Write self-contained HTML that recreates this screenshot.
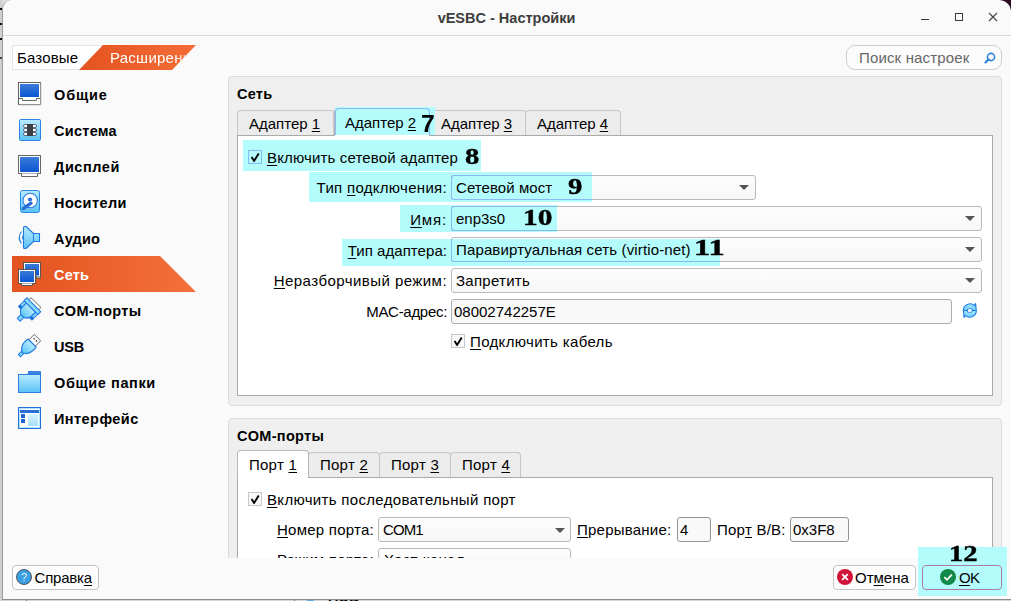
<!DOCTYPE html>
<html><head><meta charset="utf-8">
<style>
html,body{margin:0;padding:0;}
body{width:1011px;height:601px;overflow:hidden;position:relative;background:#dcdcdc;font-family:"Liberation Sans",sans-serif;}
.a{position:absolute;}
.t{position:absolute;font:15px/18px "Liberation Sans",sans-serif;white-space:pre;color:#000;letter-spacing:0.25px;}
.b{position:absolute;font:bold 14.5px/18px "Liberation Sans",sans-serif;white-space:pre;color:#000;letter-spacing:0.4px;}
.u{text-decoration:underline;text-underline-offset:2px;text-decoration-thickness:1px;}
.hl{position:absolute;background:#b4fcfb;}
.num{position:absolute;font:bold 23.5px/24px "Liberation Serif",serif;white-space:pre;color:#000;-webkit-text-stroke:0.4px #000;}
.combo{position:absolute;box-sizing:border-box;border:1px solid #b9b9b9;border-radius:3px;background:linear-gradient(#fdfdfd,#f7f7f7);}
.combo.h{border-color:#8ab8f6;background:#b4fcfb;}
.arr{position:absolute;width:0;height:0;border-left:5px solid transparent;border-right:5px solid transparent;border-top:5px solid #555;}
.field{position:absolute;box-sizing:border-box;border:1px solid #adadad;border-radius:3px;background:#f9f9f9;}
.cb{position:absolute;box-sizing:border-box;width:14px;height:14px;border:1px solid #c4c4c4;background:#fff;}
.cb svg{position:absolute;left:1px;top:1px;}
.tab{position:absolute;box-sizing:border-box;border:1px solid #c6c6c6;border-bottom:none;border-radius:4px 4px 0 0;background:#ececec;}
.btn{position:absolute;box-sizing:border-box;border:1px solid #c3c3c3;border-radius:4px;background:#fdfdfd;}
</style></head><body>
<!-- bottom background window strip -->
<div class="a" style="left:0;top:599px;width:1011px;height:2px;background:#d6d6d6;"></div><div class="a" style="left:26px;top:599px;width:1px;height:2px;background:#777;"></div><div class="a" style="left:294px;top:599px;width:1px;height:2px;background:#777;"></div><div class="b" style="left:328px;top:595px;">USB</div><div class="a" style="left:307px;top:599px;width:7px;height:2px;border-radius:3px 3px 0 0;background:#5aa8e8;"></div><div class="a" style="left:0;top:0;width:2px;height:601px;background:#cfcfcf;"></div><div class="a" style="left:0;top:8px;width:2px;height:2px;background:#111;"></div><div class="a" style="left:0;top:23px;width:2px;height:2px;background:#111;"></div><div class="a" style="left:0;top:38px;width:2px;height:2px;background:#111;"></div><div class="a" style="left:0;top:57px;width:2px;height:2px;background:#444;"></div>
<!-- window -->
<div class="a" id="win" style="left:2px;top:0;width:1009px;height:600px;background:#fafafa;border-left:1px solid #9a9a9a;border-bottom:1px solid #8a8a8a;border-radius:9px 12px 0 0;box-sizing:border-box;overflow:hidden;"></div>
<!-- dark corner top-right -->
<div class="a" style="left:995px;top:0;width:16px;height:16px;background:#2c0a22;z-index:-1"></div>
<!-- title bar -->
<div class="a" style="left:3px;top:35px;width:1008px;height:1px;background:#d9d9d9;"></div>
<div class="a" style="left:0;top:9px;width:1013px;text-align:center;font:bold 14.5px/18px 'Liberation Sans',sans-serif;color:#3d3d3d;">vESBC - Настройки</div>
<!-- window buttons -->
<div class="a" style="left:921px;top:19px;width:8px;height:1px;background:#3a3a3a;"></div>
<div class="a" style="left:955px;top:13px;width:8px;height:8px;box-sizing:border-box;border:1px solid #3a3a3a;"></div>
<svg class="a" style="left:988px;top:12px" width="10" height="10"><path d="M1 1L9 9M9 1L1 9" stroke="#444" stroke-width="1.1"/></svg>

<!-- segmented switch -->
<div class="a" style="left:12px;top:45px;width:90px;height:25px;box-sizing:border-box;border:1px solid #e4e4e4;background:#fff;"></div>
<div class="t" style="letter-spacing:0.15px;left:17px;top:49px;">Базовые</div>
<svg class="a" style="left:78px;top:45px" width="120" height="25"><defs><linearGradient id="og" x1="0" x2="1"><stop offset="0" stop-color="#e4531f"/><stop offset="1" stop-color="#f56d37"/></linearGradient></defs><polygon points="25,0 118,0 94,25 1,25" fill="url(#og)"/></svg>
<div class="t" style="left:110px;top:49px;color:#fff;width:90px;overflow:hidden;letter-spacing:0.25px;-webkit-mask-image:linear-gradient(90deg,#000 0,#000 66px,transparent 90px);">Расширенные</div>

<!-- search -->
<div class="a" style="left:846px;top:45px;width:156px;height:25px;box-sizing:border-box;border:1px solid #d0d0d0;border-radius:9px;background:#fcfcfc;"></div>
<div class="t" style="left:859px;top:49px;color:#676767;letter-spacing:0.15px;">Поиск настроек</div>
<svg class="a" style="left:984px;top:52px" width="12" height="12"><circle cx="7" cy="5" r="3.6" fill="none" stroke="#2f86d8" stroke-width="1.6"/><path d="M4.6 7.4L1.5 10.5" stroke="#2f86d8" stroke-width="2.2" stroke-linecap="round"/></svg>

<!-- SIDEBAR -->
<!-- SIDEBAR -->
<svg class="a" style="left:12px;top:256px" width="186" height="36"><defs><linearGradient id="og2" x1="0" x2="1"><stop offset="0" stop-color="#e3531f"/><stop offset="1" stop-color="#f5703c"/></linearGradient></defs><polygon points="0,0 148,0 184,36 0,36" fill="url(#og2)"/></svg>
<div class="b" style="letter-spacing:0.85px;left:54px;top:86px;">Общие</div>
<div class="b" style="letter-spacing:0.27px;left:54px;top:122px;">Система</div>
<div class="b" style="letter-spacing:0.55px;left:54px;top:158px;">Дисплей</div>
<div class="b" style="letter-spacing:0.44px;left:54px;top:194px;">Носители</div>
<div class="b" style="letter-spacing:0.2px;left:54px;top:230px;">Аудио</div>
<div class="b" style="letter-spacing:0.2px;left:54px;top:266px;color:#fff;">Сеть</div>
<div class="b" style="letter-spacing:0.34px;left:54px;top:302px;">COM-порты</div>
<div class="b" style="left:54px;top:338px;letter-spacing:-0.2px;">USB</div>
<div class="b" style="letter-spacing:0.6px;left:54px;top:374px;">Общие папки</div>
<div class="b" style="letter-spacing:0.44px;left:54px;top:410px;">Интерфейс</div>
<svg class="a" style="left:0;top:0" width="50" height="440">
<defs>
<linearGradient id="scr" x1="0" y1="0" x2="0" y2="1"><stop offset="0" stop-color="#3a7bd8"/><stop offset="1" stop-color="#0b56d2"/></linearGradient>
<linearGradient id="lb" x1="0" y1="0" x2="0" y2="1"><stop offset="0" stop-color="#b8ecff"/><stop offset="1" stop-color="#5cc2f6"/></linearGradient>
</defs>
<!-- Общие: 18,82 -->
<rect x="18.5" y="82.5" width="22" height="22" fill="#fff" stroke="#606060"/>
<rect x="20" y="84" width="19" height="13" fill="url(#scr)"/>
<path d="M19 98.5H22.5V100.5H36.5V98.5H40" fill="none" stroke="#666"/>
<path d="M41 83V105H19" fill="none" stroke="#c8c8c8" stroke-width="1"/>
<!-- Система: 18,118 -->
<rect x="19.5" y="119.5" width="21" height="21" rx="1" fill="url(#lb)" stroke="#2a86e0"/>
<g fill="#fff" stroke="#3a4a60" stroke-width="0.8">
<rect x="23.5" y="124.5" width="13" height="3" rx="1.5"/>
<rect x="23.5" y="128.5" width="13" height="3" rx="1.5"/>
<rect x="23.5" y="132.5" width="13" height="3" rx="1.5"/>
</g>
<rect x="27" y="124" width="6" height="12" fill="#3b3f46"/>
<!-- Дисплей: 18,154 -->
<rect x="18.5" y="155.5" width="22" height="18" fill="#fff" stroke="#666"/>
<rect x="20" y="157" width="19" height="15" fill="url(#scr)"/>
<path d="M21.5 173.5V176.5H37.5V173.5" fill="#fff" stroke="#666"/>
<!-- Носители: 18,190 -->
<rect x="20.5" y="190.5" width="19" height="22" rx="2" fill="url(#lb)" stroke="#2a86e0"/>
<circle cx="30.2" cy="200.5" r="7.2" fill="#fff" stroke="#2a7ee0" stroke-width="1.1"/>
<circle cx="30" cy="199.5" r="2.1" fill="#2a72dc"/>
<path d="M23.3 208.6L31 203.2" stroke="#2a6fd8" stroke-width="3.4" stroke-linecap="round"/>
<!-- Аудио: 18,226 -->
<path d="M23.5 227.5Q23.5 226.5 24.5 226.5H26L33.5 233.5H39.5V241.5H33.5L26 248.5H24.5Q23.5 248.5 23.5 247.5Z" fill="url(#lb)" stroke="#1f7ae0" stroke-width="1.1" stroke-linejoin="round"/>
<path d="M33.5 233.5V241.5" stroke="#1f7ae0" stroke-width="1"/>
<path d="M21.5 231.5Q17 237.5 21.5 243.5" fill="none" stroke="#1f7ae0" stroke-width="1.1"/>
<path d="M23 235.5Q21.5 237.5 23 239.5" fill="#9adcfb" stroke="#1f7ae0" stroke-width="0.9"/>
<!-- Сеть: 18,262 -->
<rect x="23.5" y="262.5" width="17" height="14" fill="#fff" stroke="#555"/>
<rect x="25" y="264" width="14" height="11.5" fill="url(#scr)"/>
<path d="M36.5 276.5V278H40.5V276.5" fill="#fff" stroke="#555"/>
<rect x="18.5" y="269.5" width="17" height="14" fill="#fff" stroke="#555"/>
<rect x="20" y="271" width="14" height="11" fill="url(#scr)"/>
<path d="M21.5 283.5V285.5H32.5V283.5" fill="#fff" stroke="#555"/>
<!-- COM: 18,298 -->
<g transform="translate(32.5,306) rotate(45)">
<rect x="-7" y="-4.9" width="14" height="3.5" rx="1.2" fill="#fff" stroke="#5a5a5a" stroke-width="0.9"/>
<rect x="-9.5" y="1.5" width="3.2" height="8.5" fill="#8ad8fb" stroke="#1f7ae0" stroke-width="1"/>
<rect x="6.3" y="1.5" width="3.2" height="8.5" fill="#8ad8fb" stroke="#1f7ae0" stroke-width="1"/>
<rect x="-9.8" y="7.6" width="3.6" height="3.2" fill="#1f6fd8"/>
<rect x="6.2" y="7.6" width="3.6" height="3.2" fill="#1f6fd8"/>
<rect x="-2" y="13" width="4" height="6.5" fill="#8ad8fb" stroke="#1f7ae0" stroke-width="1"/>
<path d="M-6.5 2V8A6.5 6.5 0 0 0 6.5 8V2Z" fill="url(#lb)" stroke="#1f7ae0" stroke-width="1.1"/>
<rect x="-9.8" y="-1.8" width="19.6" height="4" fill="#8ad8fb" stroke="#1f7ae0" stroke-width="1.1"/>
</g>
<!-- USB: 18,334 -->
<g transform="translate(31.8,343.3) rotate(45)">
<rect x="-4.5" y="-8" width="9" height="7.5" fill="#fff" stroke="#5a5a5a" stroke-width="0.9"/>
<rect x="-2.3" y="-5.6" width="1.4" height="1.4" fill="#333"/>
<rect x="0.9" y="-5.6" width="1.4" height="1.4" fill="#333"/>
<rect x="-1.5" y="12.5" width="3" height="5" fill="#8ad8fb" stroke="#1f7ae0" stroke-width="1"/>
<path d="M-5.8 -0.3H5.8C6.8 6 5.5 11 0 13.5C-5.5 11 -6.8 6 -5.8 -0.3Z" fill="url(#lb)" stroke="#1f7ae0" stroke-width="1.1" stroke-linejoin="round"/>
</g>
<!-- Folder: 18,370 -->
<path d="M18.5 374.5H27.5L29.5 371.5H40.5V392.5H18.5Z" fill="url(#lb)" stroke="#2a7ee0"/>
<rect x="18.5" y="374.5" width="22" height="18" fill="url(#lb)" stroke="#2a7ee0"/>
<rect x="28" y="371" width="12" height="3" fill="#3a82e0"/>
<!-- Interface: 18,406 -->
<rect x="18.5" y="407.5" width="22" height="21" fill="#fff" stroke="#1f6fd8"/>
<rect x="19.5" y="408.5" width="20" height="19" fill="none" stroke="#9fdcff" stroke-width="0.8"/>
<rect x="20" y="410" width="19" height="3" fill="#2a6fd6"/>
<rect x="21" y="414" width="4" height="4" fill="#1f62d0"/>
<rect x="21" y="419" width="4" height="4" fill="#1f62d0"/>
<rect x="28" y="414" width="10" height="12" fill="url(#lb)" opacity="0.55"/>
</svg>


<!-- GROUP 1: Сеть -->
<div class="a" style="left:228px;top:76px;width:774px;height:330px;box-sizing:border-box;border:1px solid #dcdcdc;border-radius:4px;background:#efefef;"></div>
<div class="b" style="letter-spacing:0.25px;left:237px;top:85px;">Сеть</div>

<!-- tab pane -->
<div class="a" style="left:237px;top:135px;width:756px;height:261px;box-sizing:border-box;border:1px solid #a9a9a9;background:#fff;"></div>
<div class="tab" style="left:237px;top:110px;width:97px;height:25px;"></div>
<div class="tab" style="left:430px;top:110px;width:96px;height:25px;"></div>
<div class="tab" style="left:525px;top:110px;width:96px;height:25px;"></div>
<div class="t" style="letter-spacing:0.0px;left:249px;top:115px;">Адаптер <span class="u">1</span></div>
<div class="t" style="letter-spacing:0.0px;left:441px;top:115px;">Адаптер <span class="u">3</span></div>
<div class="t" style="letter-spacing:0.0px;left:537px;top:115px;">Адаптер <span class="u">4</span></div>

<!-- selected tab 2 -->
<div class="tab" style="left:334px;top:108px;width:96px;height:28px;background:#fff;border-color:#b8b8b8;z-index:1;"></div>
<!-- highlights -->
<div class="hl" style="left:335px;top:107px;width:100px;height:28px;z-index:2;"></div>
<div class="a" style="left:335px;top:108px;width:95px;height:27px;box-sizing:border-box;border:1px solid #8ab8f6;border-bottom:none;border-radius:4px 4px 0 0;z-index:2;"></div>
<div class="t" style="letter-spacing:0.0px;left:345px;top:114px;z-index:3;">Адаптер <span class="u">2</span></div>
<div class="a" style="left:420.5px;top:113px;font:bold 23.5px/23px 'Liberation Sans',sans-serif;z-index:3;transform:scaleX(1.05);transform-origin:left;">7</div>

<div class="hl" style="left:243px;top:140px;width:238px;height:31px;"></div>
<div class="hl" style="left:309px;top:172px;width:283px;height:30px;"></div>
<div class="hl" style="left:400px;top:205px;width:157px;height:27px;"></div>
<div class="hl" style="left:342px;top:239px;width:378px;height:27px;"></div>

<!-- checkbox row -->
<div class="cb" style="left:248px;top:150px;border-color:#8ab8f6;background:#b4fcfb;"><svg width="12" height="12"><path d="M1.6 4.9L4.1 9L8.7 1.4" fill="none" stroke="#000" stroke-width="1.9" stroke-linejoin="round"/></svg></div>
<div class="t" style="left:267px;top:149px;letter-spacing:0.15px;"><span class="u">В</span>ключить сетевой адаптер</div>
<div class="num" style="left:465px;top:144px;transform:scaleX(1.22);transform-origin:left;">8</div>

<!-- labels -->
<div class="t" style="letter-spacing:0.3px;left:247px;top:179px;width:200px;text-align:right;">Тип <span class="u">п</span>одключения:</div>
<div class="t" style="letter-spacing:0.85px;left:247px;top:211px;width:200px;text-align:right;"><span class="u">И</span>мя:</div>
<div class="t" style="letter-spacing:0.05px;left:247px;top:242px;width:200px;text-align:right;"><span class="u">Т</span>ип адаптера:</div>
<div class="t" style="letter-spacing:0.45px;left:247px;top:272px;width:200px;text-align:right;"><span class="u">Н</span>еразборчивый режим:</div>
<div class="t" style="left:247px;top:303px;width:200px;text-align:right;letter-spacing:-0.3px;">MAC-а<span class="u">д</span>рес:</div>

<!-- combos -->
<div class="combo" style="left:451px;top:175px;width:305px;height:25px;"></div>
<div class="combo h" style="left:451px;top:175px;width:141px;height:25px;border-right:none;border-radius:3px 0 0 3px;"></div>
<div class="arr" style="left:739px;top:185px;"></div>
<div class="t" style="letter-spacing:0.07px;left:456px;top:179px;">Сетевой мост</div>
<div class="num" style="left:567.5px;top:174px;transform:scaleX(1.22);transform-origin:left;">9</div>

<div class="combo" style="left:451px;top:206px;width:531px;height:25px;"></div>
<div class="combo h" style="left:451px;top:206px;width:106px;height:25px;border-right:none;border-radius:3px 0 0 3px;"></div>
<div class="arr" style="left:965px;top:216px;"></div>
<div class="t" style="left:456px;top:210px;letter-spacing:0;">enp3s0</div>
<div class="num" style="left:523px;top:205px;transform:scaleX(1.25);transform-origin:left;">10</div>

<div class="combo" style="left:451px;top:237px;width:531px;height:25px;"></div>
<div class="combo h" style="left:451px;top:239px;width:269px;height:23px;border-top:none;border-right:none;border-radius:0 0 0 3px;"></div>
<div class="arr" style="left:965px;top:247px;"></div>
<div class="t" style="letter-spacing:0.14px;left:456px;top:241px;">Паравиртуальная сеть (virtio-net)</div>
<div class="num" style="left:694px;top:235px;transform:scaleX(1.38);transform-origin:left;">11</div>

<div class="combo" style="left:451px;top:268px;width:531px;height:25px;"></div>
<div class="arr" style="left:965px;top:278px;"></div>
<div class="t" style="letter-spacing:0.26px;left:456px;top:272px;">Запретить</div>

<div class="field" style="left:451px;top:299px;width:501px;height:25px;"></div>
<div class="t" style="left:454px;top:303px;letter-spacing:0;">08002742257E</div>
<svg class="a" style="left:961px;top:301px" width="18" height="19"><defs><linearGradient id="rf" x1="0" y1="0" x2="0" y2="1"><stop offset="0" stop-color="#a6e6fd"/><stop offset="1" stop-color="#6fd0fa"/></linearGradient></defs>
<path d="M2.4 9.5A6.6 6.6 0 0 1 13.5 4.6L14.6 2.6L15.3 9.5H11.6A3 3 0 0 0 6 9.5Z" fill="url(#rf)" stroke="#1f7ae0" stroke-width="1.1" stroke-linejoin="round"/>
<path d="M15.3 9.5A6.6 6.6 0 0 1 4.2 14.4L3.1 16.4L2.4 9.5H6A3 3 0 0 0 11.6 9.5Z" fill="url(#rf)" stroke="#1f7ae0" stroke-width="1.1" stroke-linejoin="round"/>
<path d="M7 8.3Q8.8 7.6 10.5 8.5M7.2 10.6Q8.9 11.4 10.6 10.6" stroke="#fff" stroke-width="0.8" fill="none"/>
</svg>

<div class="cb" style="left:451px;top:334px;border-color:#c8c8c8;background:#f8f8f8;"><svg width="12" height="12"><path d="M1.6 4.9L4.1 9L8.7 1.4" fill="none" stroke="#000" stroke-width="1.9" stroke-linejoin="round"/></svg></div>
<div class="t" style="letter-spacing:0.34px;left:470px;top:333px;"><span class="u">П</span>одключить кабель</div>


<!-- GROUP 2: COM -->
<div class="a" style="left:228px;top:418px;width:774px;height:150px;box-sizing:border-box;border:1px solid #dcdcdc;border-radius:4px;background:#efefef;"></div>
<div class="b" style="letter-spacing:0.3px;left:237px;top:427px;">COM-порты</div>
<div class="a" style="left:237px;top:477px;width:756px;height:90px;box-sizing:border-box;border:1px solid #a9a9a9;background:#fff;"></div>
<div class="tab" style="left:308px;top:452px;width:72px;height:25px;"></div>
<div class="tab" style="left:379px;top:452px;width:72px;height:25px;"></div>
<div class="tab" style="left:450px;top:452px;width:71px;height:25px;"></div>
<div class="tab" style="left:237px;top:450px;width:72px;height:28px;background:#fff;border-color:#b8b8b8;"></div>
<div class="t" style="left:249px;top:456px;">Порт <span class="u">1</span></div>
<div class="t" style="left:320px;top:456px;">Порт <span class="u">2</span></div>
<div class="t" style="left:391px;top:456px;">Порт <span class="u">3</span></div>
<div class="t" style="left:462px;top:456px;">Порт <span class="u">4</span></div>

<div class="cb" style="left:248px;top:492px;border-color:#c8c8c8;background:#f8f8f8;"><svg width="12" height="12"><path d="M1.6 4.9L4.1 9L8.7 1.4" fill="none" stroke="#000" stroke-width="1.9" stroke-linejoin="round"/></svg></div>
<div class="t" style="letter-spacing:0.32px;left:267px;top:491px;"><span class="u">В</span>ключить последовательный порт</div>

<div class="t" style="left:202px;top:521px;width:172px;text-align:right;"><span class="u">Н</span>омер порта:</div>
<div class="combo" style="left:378px;top:517px;width:193px;height:25px;"></div>
<div class="arr" style="left:555px;top:528px;"></div>
<div class="t" style="left:383px;top:521px;letter-spacing:-0.9px;">COM1</div>
<div class="t" style="letter-spacing:0.22px;left:577px;top:521px;"><span class="u">П</span>рерывание:</div>
<div class="field" style="left:677px;top:517px;width:34px;height:25px;border-color:#949494;"></div>
<div class="t" style="left:680px;top:521px;">4</div>
<div class="t" style="left:717px;top:521px;">Пор<span class="u">т</span> В/В:</div>
<div class="field" style="left:790px;top:517px;width:59px;height:25px;border-color:#949494;"></div>
<div class="t" style="left:793px;top:521px;letter-spacing:0;">0x3F8</div>

<div class="t" style="left:202px;top:551px;width:172px;text-align:right;">Режим порта:</div>
<div class="combo" style="left:378px;top:548px;width:193px;height:25px;"></div><div class="arr" style="left:555px;top:559px;"></div>
<div class="t" style="left:384px;top:551px;">Хост-канал</div>


<!-- BOTTOM BAR -->
<div class="a" style="left:3px;top:558px;width:1008px;height:41px;background:#fafafa;"></div>
<div class="btn" style="left:12px;top:565px;width:87px;height:25px;"></div>
<svg class="a" style="left:16px;top:569px" width="17" height="17"><circle cx="8" cy="8" r="7.5" fill="#3a9ee4" stroke="#4a4a4a" stroke-width="0.9"/><text x="8" y="12.3" font-family="Liberation Sans" font-size="11" fill="#e8f4ff" text-anchor="middle">?</text></svg>
<div class="t" style="letter-spacing:-0.2px;left:34.5px;top:569px;">Справк<span class="u">а</span></div>

<div class="btn" style="left:833px;top:565px;width:83px;height:25px;"></div>
<svg class="a" style="left:837px;top:569px" width="17" height="17"><circle cx="8" cy="8" r="8" fill="#d3143a"/><path d="M5.2 5.2L10.8 10.8M10.8 5.2L5.2 10.8" stroke="#fff" stroke-width="1.8"/></svg>
<div class="t" style="letter-spacing:0.0px;left:855px;top:569px;">От<span class="u">м</span>ена</div>

<div class="hl" style="left:918px;top:547px;width:89px;height:49px;"></div>
<div class="a" style="left:922px;top:565px;width:80px;height:25px;box-sizing:border-box;border:1px solid #a77fa8;border-radius:4px;"></div>
<svg class="a" style="left:940px;top:569px" width="17" height="17"><circle cx="8" cy="8" r="8" fill="#128a47"/><path d="M4.3 8.2L7 10.8L11.8 5.6" fill="none" stroke="#fff" stroke-width="1.8"/></svg>
<div class="t" style="left:959px;top:569px;letter-spacing:-0.6px;"><span class="u">O</span>K</div>
<div class="num" style="left:949px;top:541px;transform:scaleX(1.22);transform-origin:left;">12</div>

</body></html>
